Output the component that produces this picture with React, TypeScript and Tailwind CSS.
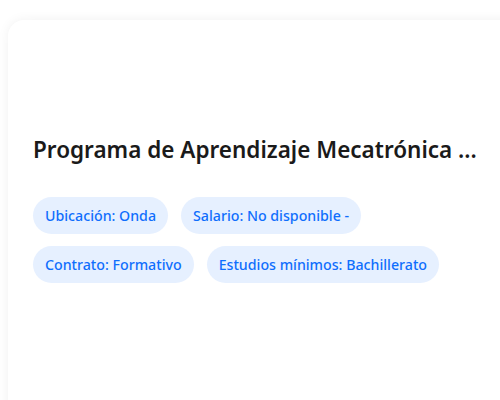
export default function App() {
  const tags = [
    ['Ubicación: Onda', 'Salario: No disponible -'],
    ['Contrato: Formativo', 'Estudios mínimos: Bachillerato'],
  ];

  return (
    <div className="w-[500px] h-[400px] bg-white overflow-hidden pt-5 pl-2 font-['Noto_Sans','Open_Sans',sans-serif]">
      {/* Card */}
      <div className="w-[520px] h-[420px] bg-white rounded-2xl shadow-[0_0_12px_rgba(0,0,0,0.06)] pl-[25px] pt-[114px]">
        <h2 className="text-[22.5px] leading-8 font-semibold text-[#1a1a1a] whitespace-nowrap">
          Programa de Aprendizaje Mecatrónica ...
        </h2>
        <div className="mt-[31px] flex flex-col gap-3">
          {tags.map((row, i) => (
            <div key={i} className="flex gap-[13px]">
              {row.map((t) => (
                <span
                  key={t}
                  className="h-[37px] px-3 flex items-center rounded-full bg-[#e6f0ff] text-[#0f6efd] text-[14.2px] font-medium"
                >
                  {t}
                </span>
              ))}
            </div>
          ))}
        </div>
      </div>
    </div>
  );
}
